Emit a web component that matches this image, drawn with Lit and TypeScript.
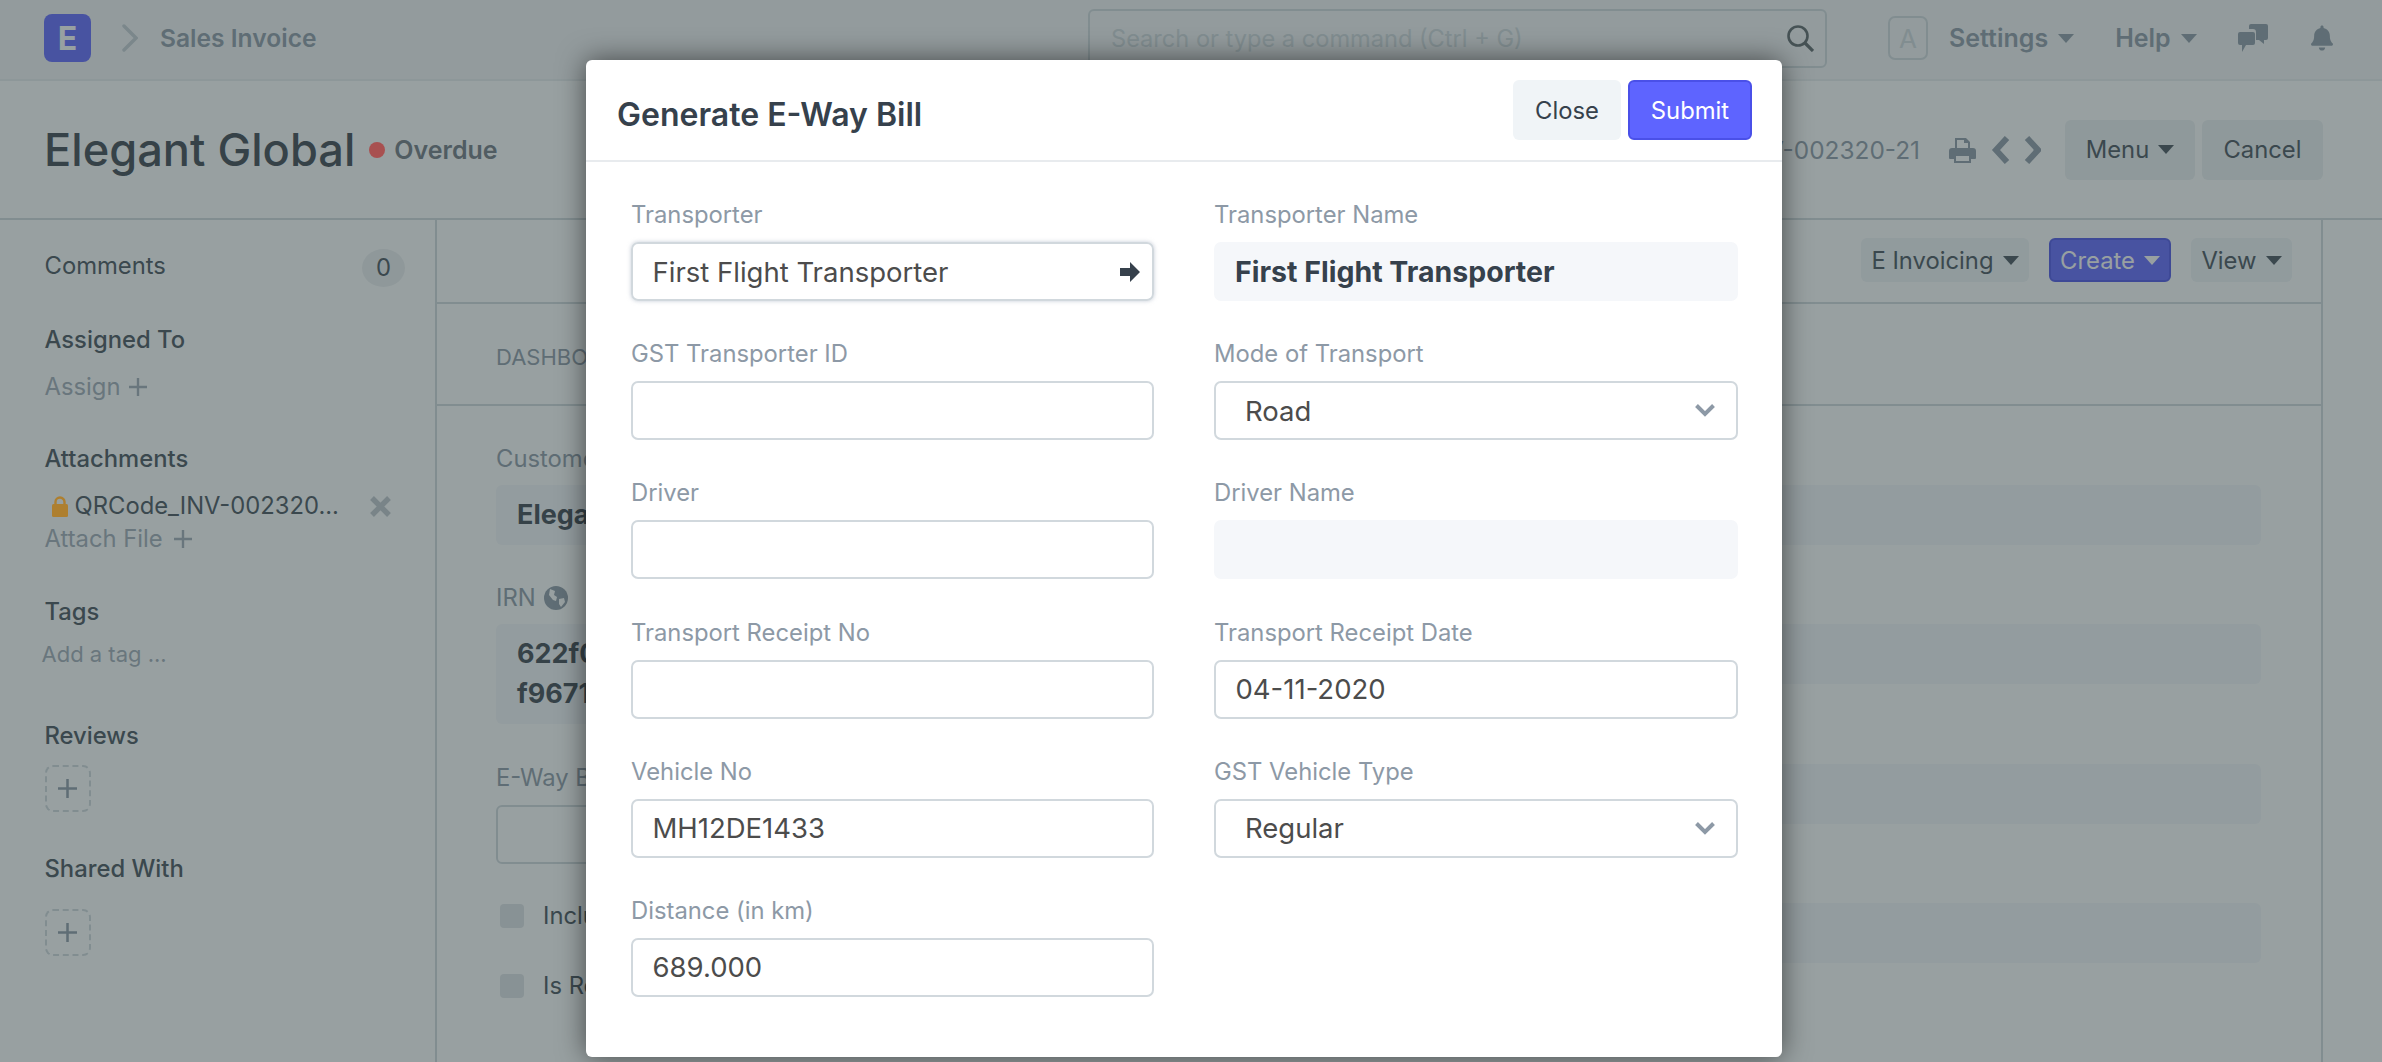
import { LitElement, html, css, svg } from "lit";
import { customElement } from "lit/decorators.js";

type Field = { label: string; value?: string; kind?: "link" | "select" | "readonly" };

const FIELDS: Field[] = [
  { label: "Transporter", value: "First Flight Transporter", kind: "link" },
  { label: "Transporter Name", value: "First Flight Transporter", kind: "readonly" },
  { label: "GST Transporter ID" },
  { label: "Mode of Transport", value: "Road", kind: "select" },
  { label: "Driver" },
  { label: "Driver Name", kind: "readonly" },
  { label: "Transport Receipt No" },
  { label: "Transport Receipt Date", value: "04-11-2020" },
  { label: "Vehicle No", value: "MH12DE1433" },
  { label: "GST Vehicle Type", value: "Regular", kind: "select" },
  { label: "Distance (in km)", value: "689.000" },
];

const plus = (size: number) => html`<svg width=${size} height=${size} viewBox="0 0 18 18" fill="none" stroke="currentColor" stroke-width="2.4"><path d="M9 0v18M0 9h18"/></svg>`;

const bell = svg`<path d="M224 512c35.32 0 63.97-28.65 63.97-64H160.03c0 35.35 28.65 64 63.97 64zm215.39-149.71c-19.32-20.76-55.47-51.99-55.47-154.29 0-77.7-54.48-139.9-127.94-155.16V32c0-17.67-14.32-32-31.98-32s-31.98 14.33-31.98 32v20.84C118.56 68.1 64.08 130.3 64.08 208c0 102.3-36.15 133.53-55.47 154.29-6 6.45-8.66 14.16-8.61 21.71.11 16.4 12.98 32 32.1 32h383.8c19.12 0 32-15.6 32.1-32 .05-7.55-2.61-15.27-8.61-21.71z"/>`;

@customElement("app-root")
export class AppRoot extends LitElement {
  static styles = css`
    :host {
      display: block;
      position: relative;
      height: 1062px;
      overflow: hidden;
      background: #fff;
      font-family: Inter, "Liberation Sans", sans-serif;
      font-size: 23.8px;
      color: #444f59;
    }
    svg { display: block; flex: none; }

    .navbar {
      display: flex;
      align-items: center;
      height: 76px;
      padding-bottom: 3px;
      background: #f4f5f6;
      border-bottom: 2px solid #e8ecef;
      color: #8d99a6;
      font-weight: 600;
      font-size: 25px;
    }
    .nav-left { display: flex; align-items: center; width: 1088px; padding-left: 44px; box-sizing: border-box; font-size: 24.6px; }
    .logo {
      display: flex; align-items: center; justify-content: center;
      width: 47px; height: 48px; border-radius: 8px;
      background: #5e64ff; color: #fff; font-size: 32px; font-weight: 700;
    }
    .crumb-sep { margin: 0 22px 0 31px; color: #c4ccd3; }
    .search {
      display: flex; align-items: center; justify-content: space-between;
      width: 739px; height: 59px; box-sizing: border-box;
      padding: 0 11px 0 21px;
      border: 2px solid #d1d8dd; border-radius: 6px;
      color: #d1d8dd; font-weight: 400; font-size: 23.6px;
    }
    .search svg { color: #5b6367; }
    .avatar {
      display: flex; align-items: center; justify-content: center;
      width: 40px; height: 44px; box-sizing: border-box; margin: 0 21px 0 61px;
      border: 2px solid #d1d8dd; border-radius: 7px; color: #d1d8dd; font-size: 26px; font-weight: 400;
    }
    .nav-menu { display: flex; align-items: center; gap: 10px; margin-right: 41px; }
    .caret { width: 0; height: 0; border-left: 8px solid transparent; border-right: 8px solid transparent; border-top: 9px solid currentColor; }
    .nav-icon { color: #8d99a6; margin-right: 43px; }

    .titlebar {
      display: flex; align-items: center; justify-content: space-between;
      height: 137px; padding: 0 59px 0 44px;
      border-bottom: 2px solid #d1d8dd;
    }
    .title-left { display: flex; align-items: center; }
    h1 { margin: 0; font-size: 45.2px; font-weight: 500; color: #3b434d; line-height: 60px; }
    .dot { width: 16px; height: 16px; border-radius: 50%; background: #a85050; margin: 0 9px 0 14px; position: relative; z-index: 11; }
    .status { font-weight: 600; color: #6f7781; font-size: 25px; }
    .title-right { display: flex; align-items: center; color: #8d99a6; }
    .rec-id { margin-right: 29px; white-space: nowrap; font-size: 24.4px; }
    .btn {
      display: flex; align-items: center; justify-content: center; gap: 9px; box-sizing: border-box;
      border-radius: 6px; background: #edf0f2; color: #444f59;
    }
    .btn-lg { height: 60px; margin-left: 7px; }
    .btn-md { height: 44px; background: #f0f4f7; }

    .page { display: flex; height: 843px; }
    .sidebar { width: 435px; box-sizing: border-box; padding: 29px 30px 0 44.5px; line-height: 30px; }
    .sb-row { display: flex; align-items: center; justify-content: space-between; height: 38px; }
    .sb-row > span:first-child { margin-top: -4px; }
    .count { display: flex; align-items: center; justify-content: center; width: 43px; height: 38px; border-radius: 50%; background: #edeff1; }
    .sb-head { font-weight: 500; }
    .sb-link { display: flex; align-items: center; gap: 11px; color: #a1abb6; }
    .attach { display: flex; align-items: center; padding-left: 7px; }
    .attach span { width: 263px; margin-left: 7px; margin-right: 1px; white-space: nowrap; }
    .dash {
      display: flex; align-items: center; justify-content: center;
      width: 46px; height: 47px; box-sizing: border-box;
      border: 2px dashed #d1d8dd; border-radius: 8px; color: #8d99a6;
    }
    .lit { position: relative; z-index: 11; }
    .add-tag { margin-left: -3px; color: #a1abb6; font-size: 22px; }

    .main { width: 1888px; box-sizing: border-box; border-left: 2px solid #d1d8dd; border-right: 2px solid #d1d8dd; }
    .toolbar { display: flex; justify-content: flex-end; gap: 20px; height: 84px; box-sizing: border-box; padding: 18px 29px 0 0; border-bottom: 2px solid #d1d8dd; }
    .primary { background: #5e64ff; border: 2px solid #4a50e8; color: #fff; }
    .tabs { height: 102px; box-sizing: border-box; padding: 40px 0 0 59px; border-bottom: 2px solid #d1d8dd; color: #8d99a6; font-size: 22px; line-height: 26px; }
    .form { display: grid; grid-template-columns: 852px 852px; column-gap: 61px; padding-left: 59px; }
    .col-l { padding-top: 38px; line-height: 30px; }
    .col-r { display: flex; flex-direction: column; gap: 79.3px; padding-top: 79px; }
    .lbl { display: flex; align-items: center; gap: 8px; color: #8d99a6; }
    .ro { background: #f5f7fa; border-radius: 6px; min-height: 60px; box-sizing: border-box; padding: 15px 21px; font-weight: 700; font-size: 27px; color: #3b434d; line-height: 40px; }
    .col-l .ro { padding: 10px 21px; }
    .box { height: 59px; box-sizing: border-box; border: 2px solid #d1d8dd; border-radius: 6px; }
    .check { display: flex; align-items: center; gap: 19px; padding-left: 4px; height: 24px; margin-bottom: 46px; white-space: nowrap; }
    .check i { width: 24px; height: 24px; border-radius: 4px; background: #dfe3e6; }

    .backdrop { position: absolute; inset: 0; z-index: 10; background: rgba(49, 65, 67, 0.5); }
    .modal {
      position: absolute; z-index: 20; left: 586px; top: 60px;
      width: 1196px; height: 997px;
      background: #fff; border-radius: 6px;
      box-shadow: 0 0 28px rgba(0, 0, 0, 0.55);
      color: #36414c;
    }
    .modal-head {
      display: flex; align-items: center; justify-content: space-between;
      height: 100px; padding: 0 30px 0 31px;
      border-bottom: 2px solid #e8ebee;
    }
    h4 { margin: 8px 0 0; font-size: 32px; font-weight: 600; color: #36414c; }
    .head-btns { display: flex; gap: 7px; }
    .mbtn { display: flex; align-items: center; justify-content: center; height: 60px; box-sizing: border-box; border-radius: 6px; }
    .close { width: 108px; background: #f0f4f7; }
    .submit { width: 124px; background: #5e64ff; border: 2px solid #4a50e8; color: #fff; }
    .fields { display: grid; grid-template-columns: 523px 524px; column-gap: 60px; row-gap: 38.2px; padding: 38px 0 0 45px; }
    .field label { display: block; line-height: 30px; margin-bottom: 12px; color: #8d99a6; }
    .input {
      display: flex; align-items: center; justify-content: space-between;
      height: 59px; box-sizing: border-box; padding: 0 12px 0 19.5px;
      border: 2px solid #d1d8dd; border-radius: 7px; font-size: 27.5px; color: #4c4c4c;
    }
    .input.link { box-shadow: 0 0 4px rgba(160, 172, 190, 0.6); color: #4c4c4c; }
    .input.select { padding: 0 21px 0 29px; }
    .input.readonly { border: none; background: #f5f7fa; padding: 0 21px; font-weight: 700; font-size: 28.5px; color: #36414c; }
    .input .arrow { color: #36414c; }
    .input .chev { color: #8d99a6; }
  `;

  private renderField(f: Field) {
    return html`<div class="field">
      <label>${f.label}</label>
      <div class="input ${f.kind ?? ""}">
        <span>${f.value ?? ""}</span>
        ${f.kind === "link"
          ? html`<svg class="arrow" width="20" height="20" viewBox="0 0 20 20" fill="currentColor"><path d="M0 6h10V0l10 10-10 10v-6H0z"/></svg>`
          : ""}
        ${f.kind === "select"
          ? html`<svg class="chev" width="20" height="13" viewBox="0 0 20 13" fill="none" stroke="currentColor" stroke-width="4"><path d="M1.5 1.5 10 10l8.5-8.5"/></svg>`
          : ""}
      </div>
    </div>`;
  }

  render() {
    return html`
      <div class="navbar">
        <div class="nav-left">
          <div class="logo">E</div>
          <svg class="crumb-sep" width="16" height="28" viewBox="0 0 16 28" fill="none" stroke="currentColor" stroke-width="3.4" stroke-linecap="round"><path d="M2 2l12 12L2 26"/></svg>
          <span>Sales Invoice</span>
        </div>
        <div class="search">
          <span>Search or type a command (Ctrl + G)</span>
          <svg width="27" height="27" viewBox="0 0 27 27" fill="none" stroke="currentColor" stroke-width="2.6"><circle cx="11" cy="11" r="9.5"/><path d="M18 18l8 8" stroke-width="3.2"/></svg>
        </div>
        <div class="avatar">A</div>
        <div class="nav-menu"><span>Settings</span><i class="caret"></i></div>
        <div class="nav-menu"><span>Help</span><i class="caret"></i></div>
        <svg class="nav-icon" width="30" height="28" viewBox="0 0 30 28" fill="currentColor"><path d="M11 2a2 2 0 0 1 2-2h15a2 2 0 0 1 2 2v12a2 2 0 0 1-2 2h-2v4l-5-4h-3v-8a3 3 0 0 0-3-3h-4z"/><path d="M0 10a2 2 0 0 1 2-2h13a2 2 0 0 1 2 2v9a2 2 0 0 1-2 2H8l-4 7v-7H2a2 2 0 0 1-2-2z"/></svg>
        <svg width="22" height="26" viewBox="0 0 448 512" fill="#8d99a6">${bell}</svg>
      </div>

      <div class="titlebar">
        <div class="title-left">
          <h1>Elegant Global</h1>
          <i class="dot"></i>
          <span class="status">Overdue</span>
        </div>
        <div class="title-right">
          <span class="rec-id">SINV-002320-21</span>
          <svg style="margin-right:15px" width="27" height="26" viewBox="0 0 27 26" fill="currentColor"><path d="M6 1h11l4 4v6h-2V6h-4V3H8v8H6z"/><path d="M3 11h21a3 3 0 0 1 3 3v7a1 1 0 0 1-1 1h-4v4H5v-4H1a1 1 0 0 1-1-1v-7a3 3 0 0 1 3-3zm4 8v5h13v-5z"/></svg>
          <svg style="margin-right:14px" width="19" height="28" viewBox="0 0 19 28" fill="none" stroke="currentColor" stroke-width="6"><path d="M16 2 5 14l11 12"/></svg>
          <svg style="margin-right:17px" width="17" height="28" viewBox="0 0 17 28" fill="none" stroke="currentColor" stroke-width="6"><path d="M3 2l11 12L3 26"/></svg>
          <div class="btn btn-lg" style="width:130px"><span>Menu</span><i class="caret"></i></div>
          <div class="btn btn-lg" style="width:121px">Cancel</div>
        </div>
      </div>

      <div class="page">
        <div class="sidebar">
          <div class="sb-row"><span>Comments</span><span class="count">0</span></div>
          <div class="sb-head" style="margin-top:38px">Assigned To</div>
          <div class="sb-link" style="margin-top:17px;gap:9px"><span>Assign</span>${plus(18)}</div>
          <div class="sb-head" style="margin-top:42px">Attachments</div>
          <div class="attach" style="margin-top:17px">
            <svg class="lit" width="16" height="21" viewBox="0 0 16 21"><path d="M3.5 9V6a4.5 4.5 0 0 1 9 0v3" fill="none" stroke="#ae7f2f" stroke-width="2.4"/><rect y="8" width="16" height="13" rx="1.5" fill="#ae7f2f"/></svg>
            <span>QRCode_INV-002320...</span>
            <svg style="margin-left:31px" width="21" height="21" viewBox="0 0 21 21" fill="none" stroke="#c0c6cc" stroke-width="5.4"><path d="M2 2l17 17M19 2 2 19"/></svg>
          </div>
          <div class="sb-link" style="margin-top:3px"><span>Attach File</span>${plus(18)}</div>
          <div class="sb-head" style="margin-top:43px">Tags</div>
          <div class="add-tag" style="margin-top:12px">Add a tag ...</div>
          <div class="sb-head" style="margin-top:52px">Reviews</div>
          <div class="dash" style="margin-top:14px">${plus(19)}</div>
          <div class="sb-head" style="margin-top:42px">Shared With</div>
          <div class="dash" style="margin-top:25px">${plus(19)}</div>
        </div>

        <div class="main">
          <div class="toolbar">
            <div class="btn btn-md" style="width:168px"><span>E Invoicing</span><i class="caret"></i></div>
            <div class="btn btn-md primary" style="width:122px"><span>Create</span><i class="caret"></i></div>
            <div class="btn btn-md" style="width:101px"><span>View</span><i class="caret"></i></div>
          </div>
          <div class="tabs">DASHBOARD</div>
          <div class="form">
            <div class="col-l">
              <div class="lbl">Customer</div>
              <div class="ro" style="margin-top:11px">Elegant Global</div>
              <div class="lbl" style="margin-top:38px">
                <span>IRN</span>
                <svg width="24" height="24" viewBox="0 0 24 24"><circle cx="12" cy="12" r="12" fill="#8d99a6"/><path d="M6 3l5 2-1 4 3 2-1 4-3-1-4-5zM15 13l5-1 1 4-4 5-2-3z" fill="#fff"/></svg>
              </div>
              <div class="ro" style="margin-top:11px;min-height:99px">622f0<br />f9671</div>
              <div class="lbl" style="margin-top:39px">E-Way Bill No.</div>
              <div class="box" style="margin-top:12px;margin-bottom:40px"></div>
              <div class="check"><i></i><span>Include Payment</span></div>
              <div class="check"><i></i><span>Is Return</span></div>
            </div>
            <div class="col-r">
              <div class="ro"></div>
              <div class="ro"></div>
              <div class="ro"></div>
              <div class="ro"></div>
            </div>
          </div>
        </div>
      </div>

      <div class="backdrop"></div>
      <div class="modal">
        <div class="modal-head">
          <h4>Generate E-Way Bill</h4>
          <div class="head-btns">
            <div class="mbtn close">Close</div>
            <div class="mbtn submit">Submit</div>
          </div>
        </div>
        <div class="fields">${FIELDS.map((f) => this.renderField(f))}</div>
      </div>
    `;
  }
}
